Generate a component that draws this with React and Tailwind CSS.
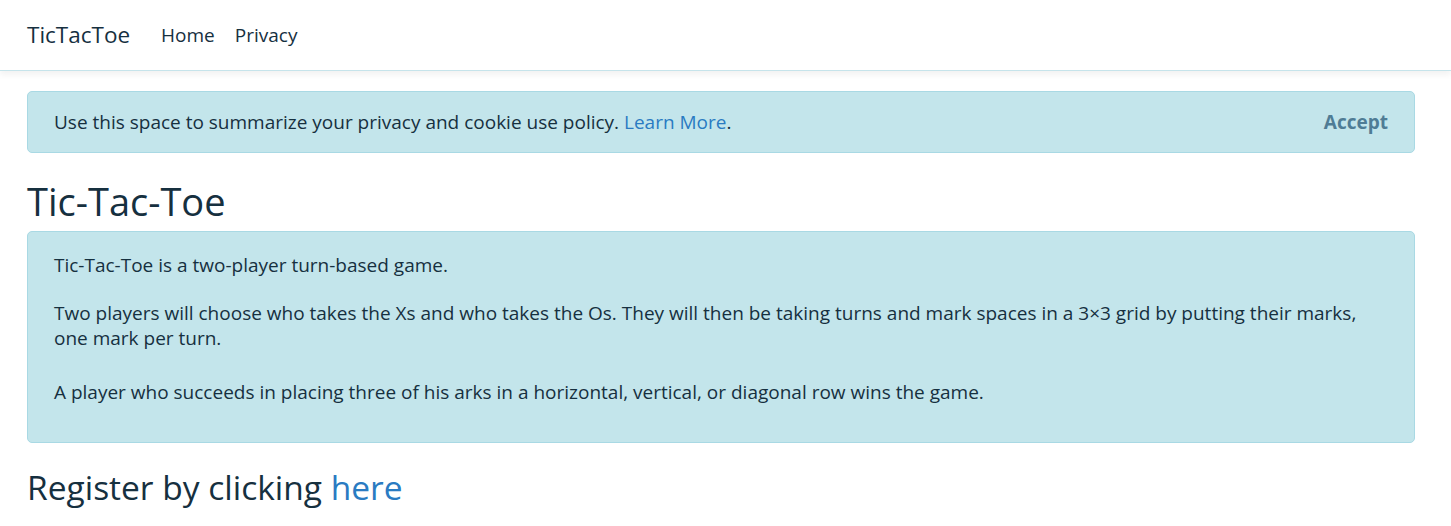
import React from 'react';

const font = { fontFamily: '"Open Sans", "Noto Sans", Arial, sans-serif' };

export default function App() {
  return (
    <div className="min-h-screen bg-white text-[#16303f]" style={font}>
      <nav className="h-[71px] border-b border-[#c6e4eb] shadow-[0_4px_6px_rgba(0,0,0,0.05)] bg-white">
        <div className="h-full px-[27px] flex items-center">
          <a className="text-[22.5px] mr-[31px] text-[#16303f]">TicTacToe</a>
          <a className="text-[19px] text-[#16303f] mr-[20px]">Home</a>
          <a className="text-[19px] text-[#16303f]">Privacy</a>
        </div>
      </nav>

      <main className="pl-[27px] pr-[36px] pt-[20px]">
        <div className="h-[62px] rounded-[5px] border border-[#a9d9e4] bg-[#c3e5eb] pl-[26px] pr-[26px] flex items-center justify-between text-[19px]">
          <span>
            Use this space to summarize your privacy and cookie use policy.{' '}
            <a className="text-[#2a7bc2]">Learn More</a>.
          </span>
          <button className="font-bold text-[#4f7c95]">Accept</button>
        </div>

        <h1 className="text-[38px] leading-[46px] mt-[25px] mb-[7px]">Tic-Tac-Toe</h1>

        <div className="h-[212px] rounded-[5px] border border-[#a9d9e4] bg-[#c3e5eb] px-[26px] pt-[21px] text-[19px] leading-[25px]">
          <p className="mb-[23px]">Tic-Tac-Toe is a two-player turn-based game.</p>
          <p className="mb-[29px]">
            Two players will choose who takes the Xs and who takes the Os. They will then be taking turns and mark spaces in a 3×3 grid by putting their marks, one mark per turn.
          </p>
          <p>A player who succeeds in placing three of his arks in a horizontal, vertical, or diagonal row wins the game.</p>
        </div>

        <h2 className="text-[33.5px] leading-[42px] mt-[23px]">
          Register by clicking <a className="text-[#2a7bc2]">here</a>
        </h2>
      </main>
    </div>
  );
}
